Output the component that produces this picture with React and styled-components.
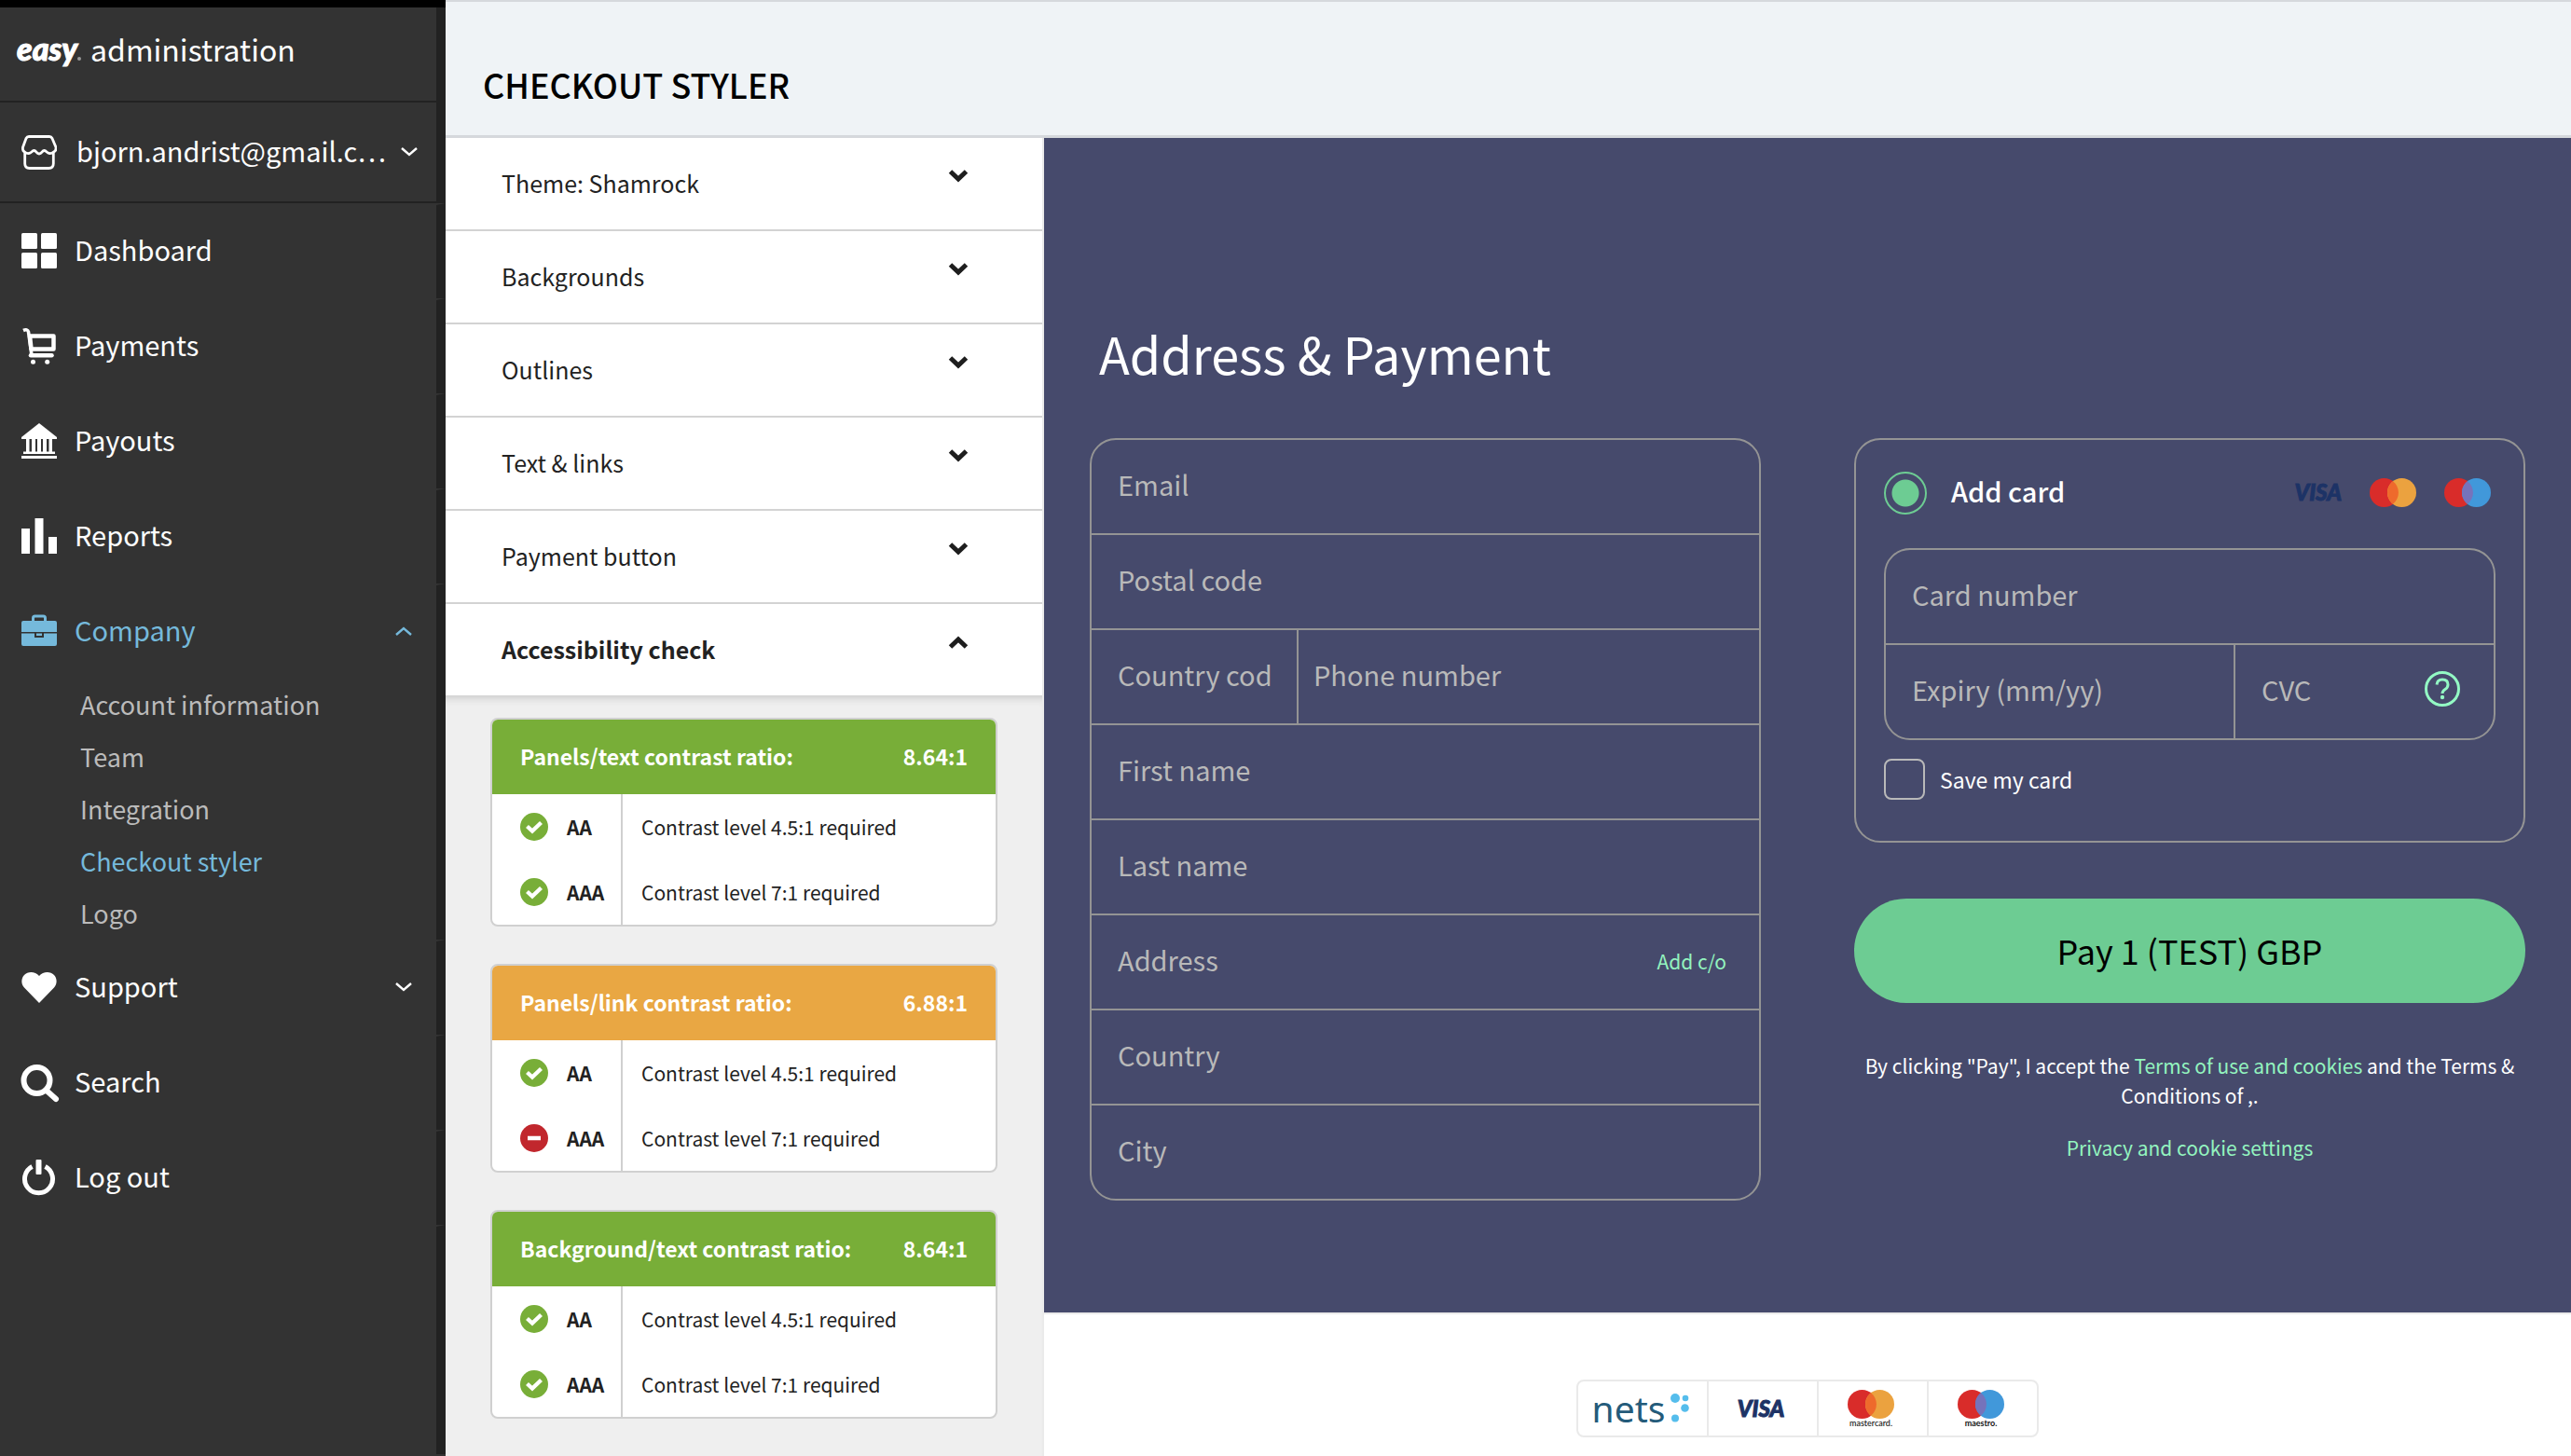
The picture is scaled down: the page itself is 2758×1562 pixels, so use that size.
import React from "react";
import styled, { createGlobalStyle } from "styled-components";

const Global = createGlobalStyle`
  *, *::before, *::after { box-sizing: border-box; }
  body { margin: 0; background: #fff; color: #222; font-family: "Noto Sans CJK SC", "Open Sans", sans-serif; }
  button, input { font: inherit; color: inherit; }
  a { color: inherit; text-decoration: none; }
  ul { list-style: none; margin: 0; padding: 0; }
  svg { display: block; flex: none; }
`;

const Page = styled.div`
  display: flex;
  min-height: 100vh;
`;

/* ---------- sidebar ---------- */

const Sidebar = styled.aside`
  flex: none;
  width: 478px;
  background: #333;
  border-top: 8px solid #000;
  color: #fff;
`;

const Brand = styled.div`
  display: flex;
  align-items: center;
  gap: 10px;
  height: 102px;
  padding: 0 0 12px 18px;
  border-right: 10px solid #222;
  border-bottom: 2px solid #222;
  font-size: 32px;
  line-height: 40px;
`;

const EasyLogo = styled.span`
  font: italic 900 34px/40px Lato, sans-serif;
  -webkit-text-stroke: 1px currentColor;
  &::after {
    content: "";
    display: inline-block;
    width: 4px;
    height: 4px;
    border-radius: 50%;
    background: #999;
  }
`;

const Account = styled.button`
  display: flex;
  align-items: center;
  width: 100%;
  height: 108px;
  padding: 0 20px 0 23px;
  background: none;
  border: 0;
  border-right: 10px solid #222;
  border-bottom: 2px solid #222;
  font-size: 29px;
  line-height: 40px;
  text-align: left;
`;

const AccountName = styled.span`
  flex: 1;
  margin-left: 21px;
  padding-bottom: 4px;
`;

const NavItem = styled.a`
  display: flex;
  align-items: center;
  gap: 19px;
  height: 102px;
  padding: 0 26px 2px 23px;
  border-top: 2px solid #333;
  border-right: 10px solid #222;
  color: ${(p) => (p.$active ? "#75b9db" : "#fff")};
  font-size: 29px;
  line-height: 40px;
`;

const NavLabel = styled.span`
  flex: 1;
  padding-bottom: 4px;
`;

const SubNav = styled.ul`
  border-right: 10px solid #222;
  padding-left: 86px;
`;

const SubLink = styled.a`
  display: block;
  color: ${(p) => (p.$active ? "#75b9db" : "#bbb")};
  font-size: 27px;
  line-height: 56px;
`;

const SidebarRest = styled.div`
  height: 246px;
  border-top: 2px solid #333;
  border-right: 10px solid #222;
`;

/* ---------- main ---------- */

const Main = styled.main`
  flex: 1;
  min-width: 0;
  display: flex;
  flex-direction: column;
`;

const Header = styled.header`
  height: 148px;
  padding: 64px 40px 0;
  background: #eff3f6;
  border-top: 2px solid #d5d8dc;
  border-bottom: 3px solid #d5d8dc;
`;

const Title = styled.h1`
  margin: 0;
  color: #000;
  font-size: 36px;
  font-weight: 500;
  line-height: 48px;
`;

const Columns = styled.div`
  display: flex;
  flex: 1;
`;

const Panel = styled.section`
  flex: none;
  width: 642px;
  background: #efefef;
  border-right: 2px solid #eaeaea;
`;

const PanelRow = styled.button`
  display: flex;
  justify-content: space-between;
  width: 100%;
  height: ${(p) => (p.$open ? 98 : 100)}px;
  padding: 30px 79px 0 60px;
  background: #fff;
  border: 0;
  border-bottom: ${(p) => (p.$open ? 0 : 2)}px solid #d3d3d3;
  font-size: 25px;
  font-weight: ${(p) => (p.$open ? 700 : 400)};
  line-height: 36px;
  text-align: left;
  svg { margin-top: 4px; }
`;

const Checks = styled.div`
  display: grid;
  gap: 40px;
  padding: 24px 48px 40px;
  box-shadow: inset 0 10px 10px -8px #c4c4c4;
`;

const Card = styled.article`
  overflow: hidden;
  background: #fff;
  border: 2px solid #d0d0d0;
  border-radius: 8px;
`;

const CardHead = styled.h2`
  display: flex;
  justify-content: space-between;
  align-items: center;
  height: 80px;
  margin: 0;
  padding: 0 30px 2px;
  background: ${(p) => p.$color};
  color: #fff;
  font-size: 23px;
  font-weight: 700;
  line-height: 32px;
`;

const Table = styled.table`
  width: 100%;
  border-collapse: collapse;
  font-size: 21px;
  line-height: 32px;
`;

const Level = styled.th`
  width: 139px;
  height: 70px;
  padding: 0 0 0 30px;
  border-right: 2px solid #d0d0d0;
  font-weight: 700;
  text-align: left;
`;

const LevelInner = styled.span`
  display: flex;
  align-items: center;
  gap: 20px;
`;

const Need = styled.td`
  padding: 0 0 0 20px;
`;

/* ---------- preview ---------- */

const Preview = styled.div`
  flex: 1;
  min-width: 0;
`;

const Checkout = styled.form`
  padding: 193px 49px 120px;
  background: #464a6c;
  border-bottom: 2px solid #eaeaea;
  color: #fff;
`;

const CheckoutTitle = styled.h2`
  margin: 0 0 53px 10px;
  font-size: 54px;
  font-weight: 400;
  line-height: 76px;
`;

const Grid = styled.div`
  display: grid;
  grid-template-columns: repeat(2, minmax(0, 1fr));
  gap: 100px;
  align-items: start;
`;

const Fields = styled.div`
  overflow: hidden;
  border: 2px solid #949494;
  border-radius: 28px;
`;

const FieldRow = styled.div`
  display: flex;
  align-items: center;
  height: 102px;
  border-bottom: 2px solid #949494;
  &:last-child { height: 100px; border-bottom: 0; }
`;

const Input = styled.input`
  flex: ${(p) => (p.$width ? "none" : 1)};
  width: ${(p) => (p.$width ? p.$width : "auto")};
  min-width: 0;
  height: 100%;
  padding: 0 28px 6px ${(p) => p.$left || 28}px;
  background: none;
  border: 0;
  border-right: ${(p) => (p.$width ? 2 : 0)}px solid #949494;
  outline: 0;
  font-size: 29px;
  line-height: 40px;
  &::placeholder { color: #b9b9b9; opacity: 1; }
`;

const AddCo = styled.a`
  margin-right: 35px;
  padding-bottom: 2px;
  color: #93f4bf;
  font-size: 21px;
  line-height: 32px;
`;

const PayCard = styled.section`
  padding: 34px 30px 44px;
  border: 2px solid #949494;
  border-radius: 28px;
`;

const MethodRow = styled.div`
  display: flex;
  align-items: center;
  height: 46px;
  margin-bottom: 36px;
`;

const Radio = styled.input`
  appearance: none;
  width: 46px;
  height: 46px;
  margin: 0 26px 0 0;
  border: 2px solid #6dcc93;
  border-radius: 50%;
  background: radial-gradient(circle, #6dcc93 14px, transparent 15px);
`;

const MethodLabel = styled.label`
  flex: 1;
  padding-bottom: 6px;
  font-size: 29px;
  font-weight: 500;
  line-height: 40px;
`;

const CardLogos = styled.div`
  display: flex;
  align-items: center;
  gap: 30px;
  padding: 0 5px 2px 0;
`;

const VisaText = styled.span`
  color: #1d3366;
  font: italic 900 24px/30px Lato, sans-serif;
  -webkit-text-stroke: 1px currentColor;
`;

const HelpButton = styled.button`
  margin-right: 36px;
  padding: 0 0 6px;
  background: none;
  border: 0;
`;

const SaveRow = styled.div`
  display: flex;
  align-items: center;
  gap: 16px;
  margin-top: 20px;
  font-size: 23px;
  line-height: 36px;
`;

const Checkbox = styled.input`
  appearance: none;
  width: 44px;
  height: 44px;
  margin: 0;
  border: 2px solid #b9b9b9;
  border-radius: 8px;
`;

const PayButton = styled.button`
  width: 100%;
  height: 112px;
  margin: 60px 0 51px;
  padding: 0 0 2px;
  background: #6dcc93;
  border: 0;
  border-radius: 56px;
  color: #000;
  font-size: 36px;
  line-height: 48px;
`;

const Legal = styled.p`
  margin: 0 0 24px;
  font-size: 21px;
  line-height: 32px;
  text-align: center;
  a { color: #93f4bf; }
`;

const Footer = styled.footer`
  display: flex;
  justify-content: center;
  padding: 70px 0 20px;
  background: #fff;
`;

const Brands = styled.ul`
  display: flex;
  height: 62px;
  border: 2px solid #eaeaea;
  border-radius: 8px;
`;

const BrandCell = styled.li`
  display: flex;
  flex-direction: column;
  align-items: center;
  justify-content: center;
  width: ${(p) => (p.$wide ? 138 : 118)}px;
  padding-right: 4px;
  border-left: ${(p) => (p.$wide ? 0 : 2)}px solid #eaeaea;
`;

const NetsLogo = styled.span`
  display: flex;
  align-items: center;
  gap: 6px;
  color: #245b7a;
  font: 400 39px/40px "Noto Sans", sans-serif;
`;

const LogoCaption = styled.span`
  color: #111;
  font: ${(p) => (p.$bold ? 700 : 500)} 9px/10px Lato, sans-serif;
`;

/* ---------- icons ---------- */

const Chevron = ({ up }) => (
  <svg width="18" height="10" viewBox="0 0 18 10" fill="none" stroke="currentColor" strokeWidth="2.4">
    <path d={up ? "M1 9l8-7 8 7" : "M1 1l8 7 8-7"} />
  </svg>
);

const BoldChevron = ({ up }) => (
  <svg width="22" height="14" viewBox="0 0 22 14" fill="none" stroke="#1e1e1e" strokeWidth="5">
    <path d={up ? "M2.500 12l8.500-8 8.500 8" : "M2.500 2l8.500 8 8.500-8"} />
  </svg>
);

const StoreIcon = () => (
  <svg width="38" height="38" viewBox="0 0 38 38" fill="none" stroke="#fff" strokeWidth="2.8" strokeLinejoin="round">
    <path d="M8 2.500h22q2 0 3 2l4 9.500q.5 4-2.500 5-2 1.800-4.500 1.500c-3 0-3-3-5.500-3s-2.500 3.500-5.500 3.500-3-3.500-5.500-3.500-2.500 3-5.500 3q-2.500.3-4.500-1.500-2.500-1-2-5L5 4.500q1-2 3-2z" />
    <path d="M3.700 19v12.500q0 5 5 5h20.600q5 0 5-5V19" />
  </svg>
);

const icons = {
  dashboard: (
    <>
      <rect width="17" height="17" rx="1.500" />
      <rect x="21" width="17" height="17" rx="1.500" />
      <rect y="21" width="17" height="17" rx="1.500" />
      <rect x="21" y="21" width="17" height="17" rx="1.500" />
    </>
  ),
  cart: (
    <>
      <path d="M2 2.500q4.500-2 5.500 1.500l3.500 25.300" fill="none" stroke="currentColor" strokeWidth="3.600" />
      <path d="M10 29.300h22.500" fill="none" stroke="currentColor" strokeWidth="4.500" strokeLinecap="round" />
      <path d="M9 8.500h25.500v14H10.500z" fill="none" stroke="currentColor" strokeWidth="4.500" strokeLinejoin="round" />
      <circle cx="12.500" cy="36.300" r="2.500" />
      <circle cx="27.700" cy="36.300" r="2.500" />
    </>
  ),
  bank: (
    <>
      <path d="M19 0l19 15v2H0v-2z" />
      <path d="M5 17h3.500v14H5zM11 17h4v14h-4zM17 17h4v14h-4zM23 17h4v14h-4zM29.500 17H33v14h-3.500z" />
      <path d="M2 30.500h34v2.500H2zM0 35h38v3H0z" />
    </>
  ),
  bars: <path d="M0 11h9v27H0zM14.500 0h9v38h-9zM29 20h9v18h-9z" />,
  briefcase: (
    <>
      <path d="M12.500 9V5q0-2 2-2h9q2 0 2 2v4" fill="none" stroke="currentColor" strokeWidth="3" />
      <path d="M2 8h34q2 0 2 2v10H0V10q0-2 2-2zM0 21.500h14V26h10v-4.500h14V33q0 2-2 2H2q-2 0-2-2z" />
      <path d="M16 21.500h6v2.500h-6z" />
    </>
  ),
  heart: <path d="M19 36L3 19.500C-1 15 0 9 3 6c4-4.500 12-4 16 1 4-5 12-5.500 16-1 3 3 4 9 0 13.500z" />,
  search: (
    <g fill="none" stroke="currentColor" strokeLinecap="round">
      <circle cx="16.500" cy="17" r="14" strokeWidth="6" />
      <path d="M27.500 28.500L37 37" strokeWidth="6" />
    </g>
  ),
  power: (
    <>
      <path d="M11.500 7.500a15 15 0 1 0 14 0" fill="none" stroke="currentColor" strokeWidth="5" />
      <rect x="15.500" y="0" width="6" height="16" rx="1" />
    </>
  ),
};

const NavIcon = ({ name }) => (
  <svg width="38" height="38" viewBox="0 0 38 38" fill="currentColor" overflow="visible">
    {icons[name]}
  </svg>
);

const StatusIcon = ({ ok }) => (
  <svg width="30" height="30" viewBox="0 0 30 30">
    <circle cx="15" cy="15" r="15" fill={ok ? "#78ae38" : "#c1272d"} />
    <path d={ok ? "M7.500 14.500l5.500 5 9.500-9" : "M8 15h14"} fill="none" stroke="#fff" strokeWidth="4.300" />
  </svg>
);

const Circles = ({ right, overlap }) => (
  <svg width="50" height="31" viewBox="0 0 50 31">
    <circle cx="15.500" cy="15.500" r="15.500" fill="#d92c2a" />
    <circle cx="34.500" cy="15.500" r="15.500" fill={right} />
    <path d="M25 3.300a15.500 15.500 0 0 1 0 24.400a15.500 15.500 0 0 1 0-24.400z" fill={overlap} />
  </svg>
);
const Mastercard = () => <Circles right="#eba23f" overlap="#ee6a2c" />;
const Maestro = () => <Circles right="#4198da" overlap="#7673bb" />;

const HelpIcon = () => (
  <svg width="38" height="38" viewBox="0 0 38 38" fill="none" stroke="#93f9c4" strokeWidth="3">
    <circle cx="19" cy="19" r="17.500" />
    <path d="M13 14.500q.5-5.500 6-5.500 6 0 6 5.500 0 3-3 5t-3 4.500" />
    <circle cx="19" cy="28" r="2.200" fill="#93f9c4" stroke="none" />
  </svg>
);

/* ---------- data ---------- */

const GREEN = "#78ae38";
const AMBER = "#e9a743";

const topNav = [
  ["dashboard", "Dashboard"],
  ["cart", "Payments"],
  ["bank", "Payouts"],
  ["bars", "Reports"],
];
const companyNav = ["Account information", "Team", "Integration", "Checkout styler", "Logo"];
const sections = ["Theme: Shamrock", "Backgrounds", "Outlines", "Text & links", "Payment button"];
const checks = [
  { name: "Panels/text contrast ratio:", ratio: "8.64:1", color: GREEN, aaa: true },
  { name: "Panels/link contrast ratio:", ratio: "6.88:1", color: AMBER, aaa: false },
  { name: "Background/text contrast ratio:", ratio: "8.64:1", color: GREEN, aaa: true },
];

const Field = ({ label, ...rest }) => <Input type="text" aria-label={label} placeholder={label} {...rest} />;

const LevelRow = ({ ok, level, need }) => (
  <tr>
    <Level scope="row">
      <LevelInner><StatusIcon ok={ok} />{level}</LevelInner>
    </Level>
    <Need>Contrast level {need} required</Need>
  </tr>
);

export default function App() {
  return (
    <Page>
      <Global />
      <Sidebar>
        <Brand><EasyLogo>easy</EasyLogo>administration</Brand>
        <Account type="button">
          <StoreIcon />
          <AccountName>bjorn.andrist@gmail.c…</AccountName>
          <Chevron />
        </Account>
        <nav>
          {topNav.map(([icon, label]) => (
            <NavItem href="#" key={label}><NavIcon name={icon} /><NavLabel>{label}</NavLabel></NavItem>
          ))}
          <NavItem href="#" $active><NavIcon name="briefcase" /><NavLabel>Company</NavLabel><Chevron up /></NavItem>
          <SubNav>
            {companyNav.map((label) => (
              <li key={label}><SubLink href="#" $active={label === "Checkout styler"}>{label}</SubLink></li>
            ))}
          </SubNav>
          <NavItem href="#"><NavIcon name="heart" /><NavLabel>Support</NavLabel><Chevron /></NavItem>
          <NavItem href="#"><NavIcon name="search" /><NavLabel>Search</NavLabel></NavItem>
          <NavItem href="#"><NavIcon name="power" /><NavLabel>Log out</NavLabel></NavItem>
        </nav>
        <SidebarRest />
      </Sidebar>
      <Main>
        <Header><Title>CHECKOUT STYLER</Title></Header>
        <Columns>
          <Panel>
            {sections.map((label) => (
              <PanelRow type="button" key={label}>{label}<BoldChevron /></PanelRow>
            ))}
            <PanelRow type="button" $open>Accessibility check<BoldChevron up /></PanelRow>
            <Checks>
              {checks.map((c) => (
                <Card key={c.name}>
                  <CardHead $color={c.color}><span>{c.name}</span><span>{c.ratio}</span></CardHead>
                  <Table>
                    <tbody>
                      <LevelRow ok level="AA" need="4.5:1" />
                      <LevelRow ok={c.aaa} level="AAA" need="7:1" />
                    </tbody>
                  </Table>
                </Card>
              ))}
            </Checks>
          </Panel>
          <Preview>
            <Checkout>
              <CheckoutTitle>Address &amp; Payment</CheckoutTitle>
              <Grid>
                <Fields>
                  <FieldRow><Field label="Email" /></FieldRow>
                  <FieldRow><Field label="Postal code" /></FieldRow>
                  <FieldRow>
                    <Field label="Country code" $width="222px" />
                    <Field label="Phone number" $left={16} />
                  </FieldRow>
                  <FieldRow><Field label="First name" /></FieldRow>
                  <FieldRow><Field label="Last name" /></FieldRow>
                  <FieldRow><Field label="Address" /><AddCo href="#">Add c/o</AddCo></FieldRow>
                  <FieldRow><Field label="Country" /></FieldRow>
                  <FieldRow><Field label="City" /></FieldRow>
                </Fields>
                <div>
                  <PayCard>
                    <MethodRow>
                      <Radio type="radio" id="add-card" defaultChecked />
                      <MethodLabel htmlFor="add-card">Add card</MethodLabel>
                      <CardLogos><VisaText>VISA</VisaText><Mastercard /><Maestro /></CardLogos>
                    </MethodRow>
                    <Fields>
                      <FieldRow><Field label="Card number" /></FieldRow>
                      <FieldRow>
                        <Field label="Expiry (mm/yy)" $width="375px" />
                        <Field label="CVC" />
                        <HelpButton type="button" aria-label="About CVC"><HelpIcon /></HelpButton>
                      </FieldRow>
                    </Fields>
                    <SaveRow>
                      <Checkbox type="checkbox" id="save-card" />
                      <label htmlFor="save-card">Save my card</label>
                    </SaveRow>
                  </PayCard>
                  <PayButton type="button">Pay 1 (TEST) GBP</PayButton>
                  <Legal>
                    By clicking "Pay", I accept the <a href="#">Terms of use and cookies</a> and the Terms &amp; Conditions of ,.
                  </Legal>
                  <Legal><a href="#">Privacy and cookie settings</a></Legal>
                </div>
              </Grid>
            </Checkout>
            <Footer>
              <Brands>
                <BrandCell $wide>
                  <NetsLogo>
                    nets
                    <svg width="20" height="32" viewBox="0 0 20 32" fill="#55bdec">
                      <circle cx="5" cy="5" r="5" />
                      <circle cx="16" cy="5" r="3.300" />
                      <circle cx="15.500" cy="15.500" r="4.300" />
                      <circle cx="5" cy="26.500" r="4" />
                    </svg>
                  </NetsLogo>
                </BrandCell>
                <BrandCell><VisaText>VISA</VisaText></BrandCell>
                <BrandCell><Mastercard /><LogoCaption>mastercard.</LogoCaption></BrandCell>
                <BrandCell><Maestro /><LogoCaption $bold>maestro.</LogoCaption></BrandCell>
              </Brands>
            </Footer>
          </Preview>
        </Columns>
      </Main>
    </Page>
  );
}
